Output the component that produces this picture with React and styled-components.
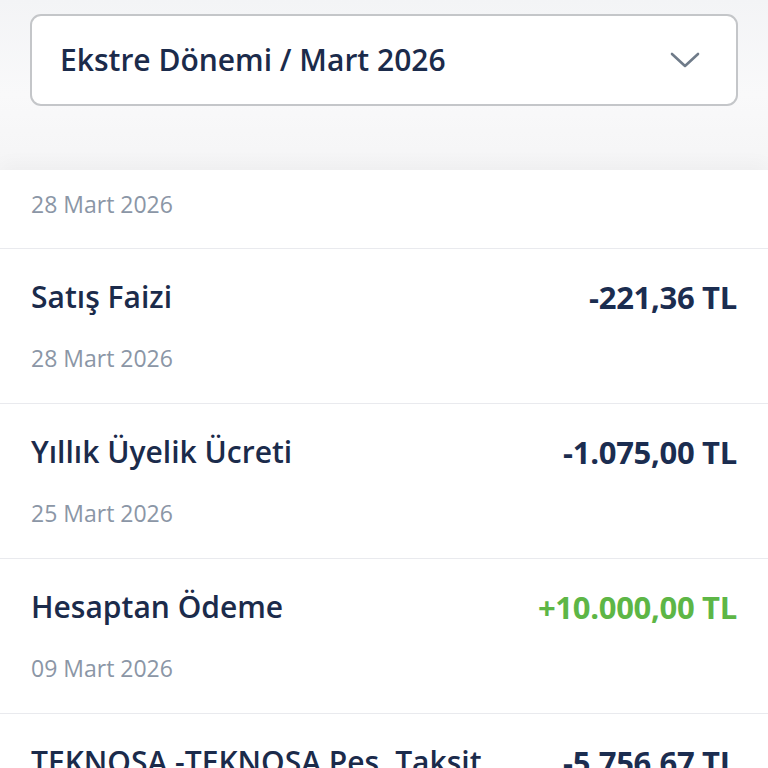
import styled, { createGlobalStyle } from 'styled-components';

const Global = createGlobalStyle`
  body {
    margin: 0;
    background: #ffffff;
    font-family: "Open Sans", "Noto Sans", sans-serif;
  }
`;

const Page = styled.div`
  width: 768px;
  height: 768px;
  overflow: hidden;
  background: #ffffff;
`;

const Header = styled.div`
  background: linear-gradient(#f3f4f6, #f9f9fa 55%, #f5f5f6);
  padding: 14px 30px 64px;
`;

const Select = styled.div`
  height: 88px;
  box-sizing: content-box;
  border: 2px solid #c4c6c9;
  border-radius: 11px;
  background: #ffffff;
  display: flex;
  align-items: center;
  justify-content: space-between;
  padding: 0 36px 0 28px;
`;

const SelectLabel = styled.span`
  font-size: 30px;
  font-weight: 600;
  color: #1b2b4b;
  line-height: 36px;
`;

const List = styled.div`
  background: #ffffff;
  box-shadow: 0 -6px 18px rgba(0, 0, 0, 0.03);
  position: relative;
`;

const Row = styled.div`
  display: flex;
  flex-direction: column;
  padding: ${(p) => (p.$head ? '20px 31px 30px' : '31px 31px 31px')};
  border-bottom: 1px solid #e9eaee;
`;

const Line = styled.div`
  display: flex;
  justify-content: space-between;
  align-items: center;
  height: 34px;
  margin-bottom: 30px;
`;

const Title = styled.span`
  font-size: 30px;
  font-weight: 600;
  color: #1b2b4b;
  white-space: nowrap;
  line-height: 34px;
`;

const Amount = styled.span`
  font-size: 31px;
  font-weight: 700;
  color: ${(p) => (p.$positive ? '#5db646' : '#1b2d50')};
  white-space: nowrap;
  line-height: 34px;
  letter-spacing: -0.3px;
`;

const DateText = styled.span`
  font-size: 23px;
  line-height: 28px;
  color: #8b96a6;
`;

const Chevron = () => (
  <svg width="30" height="18" viewBox="0 0 30 18" fill="none">
    <path d="M2 3 L15 15 L28 3" stroke="#6f7b89" strokeWidth="2.6" strokeLinecap="round" strokeLinejoin="round" />
  </svg>
);

const items = [
  { title: 'Satış Faizi', amount: '-221,36 TL', date: '28 Mart 2026' },
  { title: 'Yıllık Üyelik Ücreti', amount: '-1.075,00 TL', date: '25 Mart 2026' },
  { title: 'Hesaptan Ödeme', amount: '+10.000,00 TL', date: '09 Mart 2026', positive: true },
  { title: 'TEKNOSA -TEKNOSA Peş. Taksit', amount: '-5.756,67 TL', date: '09 Mart 2026' },
];

export default function App() {
  return (
    <Page>
      <Global />
      <Header>
        <Select>
          <SelectLabel>Ekstre Dönemi / Mart 2026</SelectLabel>
          <Chevron />
        </Select>
      </Header>
      <List>
        <Row $head>
          <DateText>28 Mart 2026</DateText>
        </Row>
        {items.map((it) => (
          <Row key={it.title}>
            <Line>
              <Title>{it.title}</Title>
              <Amount $positive={it.positive}>{it.amount}</Amount>
            </Line>
            <DateText>{it.date}</DateText>
          </Row>
        ))}
      </List>
    </Page>
  );
}
